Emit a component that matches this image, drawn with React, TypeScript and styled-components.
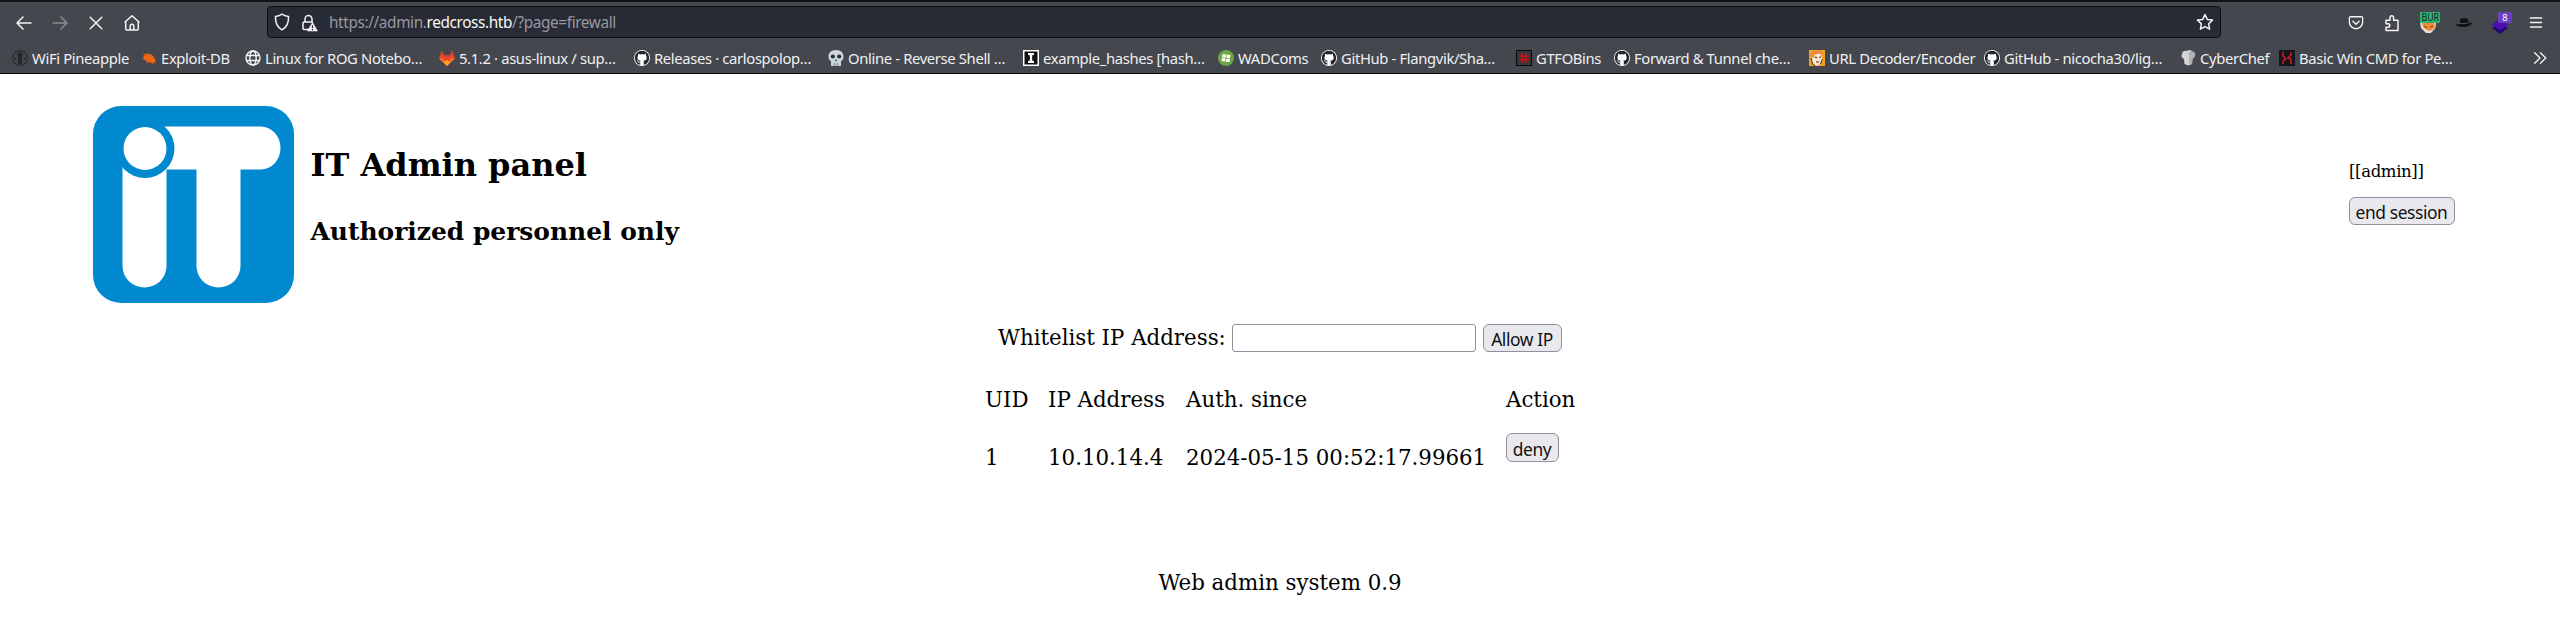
import React from "react";
import styled, { createGlobalStyle } from "styled-components";
import { FaGithub } from "react-icons/fa";

const Global = createGlobalStyle`
  * { box-sizing: border-box; }
  html, body { margin: 0; background: #fff; }
  body { font-family: "DejaVu Serif", serif; color: #000; overflow: hidden; }
`;

const Page = styled.div`
  width: 2560px;
  height: 632px;
  display: flex;
  flex-direction: column;
`;

const Chrome = styled.header`
  height: 74px;
  flex: none;
  background: #44474d;
  border-top: 2px solid #131418;
  border-bottom: 1px solid #0d0e14;
  font-family: "Noto Sans", sans-serif;
  color: #f0f0f2;
`;

const Toolbar = styled.div`
  height: 40px;
  display: flex;
  align-items: center;
  padding: 0 6px;
  svg { display: block; flex: none; }
`;

const ToolButton = styled.span<{ $dim?: boolean; $w?: number }>`
  width: ${(p) => p.$w ?? 36}px;
  padding-top: 1px;
  display: flex;
  justify-content: center;
  flex: none;
  opacity: ${(p) => (p.$dim ? 0.4 : 1)};
`;

const UrlBar = styled.div`
  width: 1954px;
  height: 32px;
  flex: none;
  margin: 0 117px;
  padding: 0 6px 0 5px;
  display: flex;
  align-items: center;
  background: #282a36;
  border: 1px solid #0c0d12;
  border-radius: 4px;
`;

const Url = styled.span`
  flex: 1;
  margin-left: 2px;
  font-size: 15.33px;
  letter-spacing: -0.37px;
  line-height: 20px;
  color: #97989e;
  white-space: nowrap;
  b { font-weight: 400; color: #f8f8f2; }
`;

const Bookmarks = styled.nav`
  height: 31px;
  display: flex;
  align-items: center;
  padding: 0 12px;
`;

const Bookmark = styled.span<{ $w: number }>`
  width: ${(p) => p.$w}px;
  flex: none;
  display: flex;
  align-items: center;
  gap: 4px;
  font-size: 14.8px;
  letter-spacing: -0.35px;
  line-height: 20px;
  white-space: nowrap;
  svg { display: block; flex: none; }
`;

const Header = styled.div`
  height: 230px;
  flex: none;
  display: flex;
  padding: 32px 0 0 93px;
`;

const Titles = styled.div`
  margin-left: 16.5px;
  flex: 1;
`;

const Title = styled.h1`
  font-size: 32px;
  line-height: 38px;
  margin: 40px 0 0;
`;

const Subtitle = styled.h2`
  font-size: 24.93px;
  line-height: 30px;
  margin: 33px 0 0;
`;

const Session = styled.div`
  width: 211px;
  padding-top: 55px;
  font-size: 16.5px;
  letter-spacing: -0.35px;
  line-height: 22px;
`;

const Button = styled.button<{ $w: number; $h?: number; $lift?: number }>`
  width: ${(p) => p.$w}px;
  height: ${(p) => p.$h ?? 28}px;
  margin: ${(p) => -(p.$lift ?? 0)}px 0 0;
  padding: 2px 1px 0 0;
  display: block;
  flex: none;
  font-family: "Noto Sans", sans-serif;
  font-size: 17.4px;
  letter-spacing: -0.4px;
  line-height: 24px;
  color: #111;
  background: #e9e9ed;
  border: 1px solid #8f8f9d;
  border-radius: 6px;
`;

const SessionForm = styled.div`
  margin-top: 14px;
`;

const WhitelistForm = styled.form`
  display: flex;
  align-items: flex-end;
  margin: 19px 0 0 998px;
  height: 29px;
  font-size: 21.33px;
  line-height: 29px;
`;

const Label = styled.label`
  width: 234px;
  white-space: nowrap;
`;

const IpInput = styled.input`
  width: 244px;
  height: 28px;
  margin: 0 7px 0 0;
  border: 1px solid #8f8f9d;
  border-radius: 3px;
  background: #fff;
`;

const Table = styled.div`
  display: grid;
  grid-template-columns: 63px 138px 320px 80px;
  grid-template-rows: 54px 44px;
  margin: 34px 0 0 985px;
  font-size: 21.33px;
  line-height: 28px;
  white-space: nowrap;
`;

const Cell = styled.span<{ $top?: number }>`
  padding-top: ${(p) => p.$top ?? 0}px;
`;

const Footer = styled.footer`
  margin-top: 85px;
  text-align: center;
  font-size: 21.33px;
  line-height: 28px;
`;

const ItLogo = () => (
  <svg width="201" height="197" viewBox="0 0 201 197">
    <rect width="201" height="197" rx="28" fill="#0089cf" />
    <g fill="#fff">
      <path d="M71 20.5H168a19.500 21.500 0 0 1 0 43H147.500V160a22 21.500 0 0 1-44 0V63.500H60V20.500Z" />
      <path d="M29.500 50H73.500V160a22 21.500 0 0 1-44 0Z" />
    </g>
    <circle cx="52" cy="42.500" r="29.500" fill="#0089cf" />
    <circle cx="52" cy="42.500" r="21.500" fill="#fff" />
  </svg>
);

const Line = ({ d, size = 18 }: { d: string; size?: number }) => (
  <svg width={size} height={size} viewBox="0 0 18 18" fill="none" stroke="#f4f4f6" strokeWidth="1.5" strokeLinecap="round" strokeLinejoin="round">
    <path d={d} />
  </svg>
);

const Octo = () => (
  <svg width="16" height="16" viewBox="0 0 16 16">
    <circle cx="8" cy="8" r="8" fill="#fff" />
    <g transform="translate(.6 .6)"><FaGithub size={14.8} color="#24292e" /></g>
  </svg>
);

const Pineapple = () => (
  <svg width="16" height="16" viewBox="0 0 16 16">
    <circle cx="8" cy="8" r="7.300" fill="#47484d" stroke="#2b2c30" strokeWidth="1.200" />
    <circle cx="8" cy="4.500" r="2.600" fill="#26272b" />
    <rect x="6" y="5" width="4" height="9" rx="1.500" fill="#26272b" />
    <path d="M3.500 7.500v3M12.500 7.500v3" stroke="#2b2c30" strokeWidth="1.500" />
  </svg>
);

const Bug = () => (
  <svg width="16" height="16" viewBox="0 0 16 16">
    <path d="M1.500 3.500 5 4.500l1-1.700L7.500 4l3 .5 2 2 1.500 3 1.500.5-1.800 1 .3 2.500-1.800-1.200-.7 2-1.500-1.800-2.500-.3-2 1 .3-2L3 9.500 1 9l2-1-1-1.500 2-.5Z" fill="#f0650f" />
  </svg>
);

const Globe = () => (
  <svg width="16" height="16" viewBox="0 0 16 16" fill="none" stroke="#f4f4f6" strokeWidth="1.400">
    <circle cx="8" cy="8" r="7" />
    <ellipse cx="8" cy="8" rx="3.200" ry="7" />
    <path d="M1.500 5.500h13M1.500 10.500h13" />
  </svg>
);

const Gitlab = () => (
  <svg width="16" height="16" viewBox="0 0 16 16">
    <path d="M2.800 0 5 5.300h6L13.200 0 16 8.500 8 16 0 8.500Z" fill="#e24329" />
    <path d="M0 8.500 4 8l4 8ZM16 8.500 12 8l-4 8Z" fill="#fc6d26" />
    <path d="M4.500 12 8 9.800l3.500 2.200L8 16Z" fill="#fca326" />
  </svg>
);

const Skull = () => (
  <svg width="16" height="16" viewBox="0 0 16 16">
    <path d="M8 0c4.600 0 7.500 2.800 7.500 6.600 0 2.400-1 3.800-2.500 4.600V16H3v-4.800C1.500 10.400.5 9 .5 6.600.5 2.800 3.400 0 8 0Z" fill="#ccd6dd" />
    <circle cx="4.800" cy="6.500" r="2.100" fill="#292f33" />
    <circle cx="11.200" cy="6.500" r="2.100" fill="#292f33" />
    <path d="M7 11l1-1.800L9 11ZM6 13v3M8 13v3M10 13v3" fill="#292f33" stroke="#66757f" strokeWidth=".7" />
  </svg>
);

const Hashcat = () => (
  <svg width="16" height="16" viewBox="0 0 16 16">
    <rect width="16" height="16" fill="#fff" />
    <rect x="1.500" y="1.500" width="13" height="13" fill="#111" />
    <path d="M5 3h6v2H9.500l-.5 3 .5 3H11v2H5v-2h1.500L7 8l-.5-3H5Z" fill="#fff" />
  </svg>
);

const WindowsBall = () => (
  <svg width="16" height="16" viewBox="0 0 16 16">
    <circle cx="8" cy="8" r="8" fill="#6da544" />
    <g fill="#fff" transform="rotate(8 8 8)">
      <path d="M4 4.500h3.600v3.200H4ZM8.400 4.500H12v3.200H8.400ZM4 8.500h3.600v3.200H4ZM8.400 8.500H12v3.200H8.400Z" />
    </g>
  </svg>
);

const Gtfo = () => (
  <svg width="16" height="16" viewBox="0 0 16 16">
    <rect x=".5" y=".5" width="15" height="15" fill="#35353b" stroke="#08080a" />
    <path d="M6.300 3v10M9.700 3v10M3 6.300h10M3 9.700h10" stroke="#cc1016" strokeWidth="1.500" />
  </svg>
);

const Face = () => (
  <svg width="16" height="16" viewBox="0 0 16 16">
    <rect width="16" height="16" fill="#f5a01e" />
    <path d="M3 5c2-3 6-4 9-1l1.500 6-3.500 5-4 1-3-5Z" fill="#f8e6d0" />
    <path d="M1 6c0-6 10-7 13-3l-1 2-3-1.500L6 4.500 4 8Z" fill="#e98b3a" />
    <path d="M5.500 7l2.500.7M10 7.500l2-.7M7 12h3M2 8l1.500 6 3 2M13.500 9l-2 5" stroke="#43301f" fill="none" />
  </svg>
);

const ChefHat = () => (
  <svg width="16" height="16" viewBox="0 0 16 16">
    <path d="M2 4c0-3 3-4 5-3 2-1.500 4-1 5 .5 3 0 4 3 2.500 5L12.500 9l-.5 5-4 1.500L4.500 14 4 9C1.500 8 1 6 2 4Z" fill="#d4d4d4" />
    <path d="M9 2l3-.5c3 0 4 3 2.500 5L12.500 9l-.5 5-3 1Z" fill="#aeb0b3" />
  </svg>
);

const BlackRed = () => (
  <svg width="16" height="16" viewBox="0 0 16 16">
    <rect width="16" height="16" fill="#15161a" />
    <path d="M4 2v4l3 3-3 2v3M12 2v3L9 8l3 1v5" fill="none" stroke="#e0201c" strokeWidth="1.400" />
  </svg>
);

const bookmarks: [string, React.FC, number][] = [
  ["WiFi Pineapple", Pineapple, 129],
  ["Exploit-DB", Bug, 104],
  ["Linux for ROG Notebo…", Globe, 194],
  ["5.1.2 · asus-linux / sup…", Gitlab, 195],
  ["Releases · carlospolop…", Octo, 194],
  ["Online - Reverse Shell …", Skull, 195],
  ["example_hashes [hash…", Hashcat, 195],
  ["WADComs", WindowsBall, 103],
  ["GitHub - Flangvik/Sha…", Octo, 195],
  ["GTFOBins", Gtfo, 98],
  ["Forward & Tunnel che…", Octo, 195],
  ["URL Decoder/Encoder", Face, 175],
  ["GitHub - nicocha30/lig…", Octo, 196],
  ["CyberChef", ChefHat, 99],
  ["Basic Win CMD for Pe…", BlackRed, 253],
];

const Shield = () => (
  <svg width="18" height="18" viewBox="0 0 18 18" fill="none" stroke="#f4f4f6" strokeWidth="1.500">
    <path d="M9 1.200c2 1.500 4 2 6.500 2.300C15.800 10 13.500 14.500 9 16.800 4.500 14.500 2.200 10 2.500 3.500 5 3.200 7 2.700 9 1.200Z" strokeLinejoin="round" />
  </svg>
);

const LockWarning = () => (
  <svg width="18" height="18" viewBox="0 0 18 18">
    <path d="M5 8V5a3.500 3.500 0 0 1 7 0v3M9 15.500H4a1 1 0 0 1-1-1V9a1 1 0 0 1 1-1h9" fill="none" stroke="#f4f4f6" strokeWidth="1.500" />
    <path d="M12.500 8.500 17.500 17H7.500Z" fill="#f4f4f6" stroke="#f4f4f6" strokeWidth=".6" strokeLinejoin="round" />
    <path d="M12.500 11.200v3M12.500 15v1.200" stroke="#282a36" strokeWidth="1.300" />
  </svg>
);

const BurpFox = () => (
  <svg width="24" height="26" viewBox="0 0 24 26">
    <path d="M4 12h16l-.5 6-4.500 5h-5l-5-5Z" fill="#e8e0d4" />
    <path d="M6 12h12l1 6-5 3-3-1-4-3Z" fill="#ef8b35" />
    <path d="M8 16.500l3 1M14 17.500l3-2" stroke="#754018" />
    <rect x="4" y="2" width="20" height="11" rx="1" fill="#2fb170" />
    <text x="5.500" y="11.200" fontSize="10" fontFamily="Noto Sans" fill="#12251b" textLength="17.500" lengthAdjust="spacingAndGlyphs">BUR</text>
  </svg>
);

const Hat = () => (
  <svg width="18" height="18" viewBox="0 0 18 18">
    <path d="M5 6c0-2.500 8-2.500 8.500 0l.3 3c1.500.2 2.500-.2 3.200-.7.500 2-3 4.700-8 4.700S1 11.800 1 10.300c1 0 2.400 0 4-.4Z" fill="#101114" />
    <path d="M5 9c2 1 6 1 8.500-.3" stroke="#55575c" fill="none" />
  </svg>
);

const Layers = () => (
  <svg width="24" height="26" viewBox="0 0 24 26">
    <path d="M12 13l8 5-8 6-8-6Z" fill="#210a70" />
    <path d="M12 8l8 7-8 5-8-5Z" fill="#4b0fb5" />
    <rect x="10" y="2" width="14" height="11" rx="1.500" fill="#6b3fc4" />
    <text x="17" y="11" textAnchor="middle" fontSize="9.500" fontFamily="Noto Sans" fill="#fff">8</text>
  </svg>
);

export default function App() {
  return (
    <Page>
      <Global />
      <Chrome>
        <Toolbar>
          <ToolButton><Line d="M16 9H2.500M8 3 2 9l6 6" /></ToolButton>
          <ToolButton $dim><Line d="M2 9h13.500M10 3l6 6-6 6" /></ToolButton>
          <ToolButton><Line d="M3.200 3.200l11.600 11.600M14.800 3.200 3.200 14.800" /></ToolButton>
          <ToolButton><Line d="M2 8 9 1.700 16 8M2.700 7.500V15a1 1 0 0 0 1 1h10.600a1 1 0 0 0 1-1V7.500M7.200 16v-4a1.800 1.800 0 0 1 3.600 0V16" /></ToolButton>
          <UrlBar>
            <Shield />
            <ToolButton $w={36}><LockWarning /></ToolButton>
            <Url>https://admin.<b>redcross.htb</b>/?page=firewall</Url>
            <Line d="M9 1.500l2.300 4.900 5.200.7-3.800 3.700.9 5.400L9 13.600l-4.600 2.600.9-5.400L1.500 7.100l5.200-.7Z" />
          </UrlBar>
          <ToolButton><Line size={16} d="M3 2h12a1.500 1.500 0 0 1 1.500 1.500V8a7.500 7.500 0 0 1-15 0V3.500A1.500 1.500 0 0 1 3 2ZM5.500 7 9 10.500 12.500 7" /></ToolButton>
          <ToolButton><Line d="M3 9V6.200h4V3.500a1.800 1.800 0 0 1 3.600 0v2.700H15V16.500H3v-3.300h2a1.700 1.700 0 0 0 0-3.500H3" /></ToolButton>
          <ToolButton><BurpFox /></ToolButton>
          <ToolButton><Hat /></ToolButton>
          <ToolButton><Layers /></ToolButton>
          <ToolButton><Line d="M3.500 4h11M3.500 8.500h11M3.500 13h11" /></ToolButton>
        </Toolbar>
        <Bookmarks>
          {bookmarks.map(([label, Icon, w]) => (
            <Bookmark key={label} $w={w}><Icon />{label}</Bookmark>
          ))}
          <Line d="M3 3l6 6-6 6M9.500 3l6 6-6 6" size={16} />
        </Bookmarks>
      </Chrome>
      <Header>
        <ItLogo />
        <Titles>
          <Title>IT Admin panel</Title>
          <Subtitle>Authorized personnel only</Subtitle>
        </Titles>
        <Session>
          [[admin]]
          <SessionForm><Button $w={106}>end session</Button></SessionForm>
        </Session>
      </Header>
      <WhitelistForm>
        <Label>Whitelist IP Address:</Label>
        <IpInput />
        <Button type="button" $w={79}>Allow IP</Button>
      </WhitelistForm>
      <Table>
        <Cell>UID</Cell>
        <Cell>IP Address</Cell>
        <Cell>Auth. since</Cell>
        <Cell>Action</Cell>
        <Cell $top={4}>1</Cell>
        <Cell $top={4}>10.10.14.4</Cell>
        <Cell $top={4}>2024-05-15 00:52:17.99661</Cell>
        <Button $w={53} $h={29} $lift={7}>deny</Button>
      </Table>
      <Footer>Web admin system 0.9</Footer>
    </Page>
  );
}
